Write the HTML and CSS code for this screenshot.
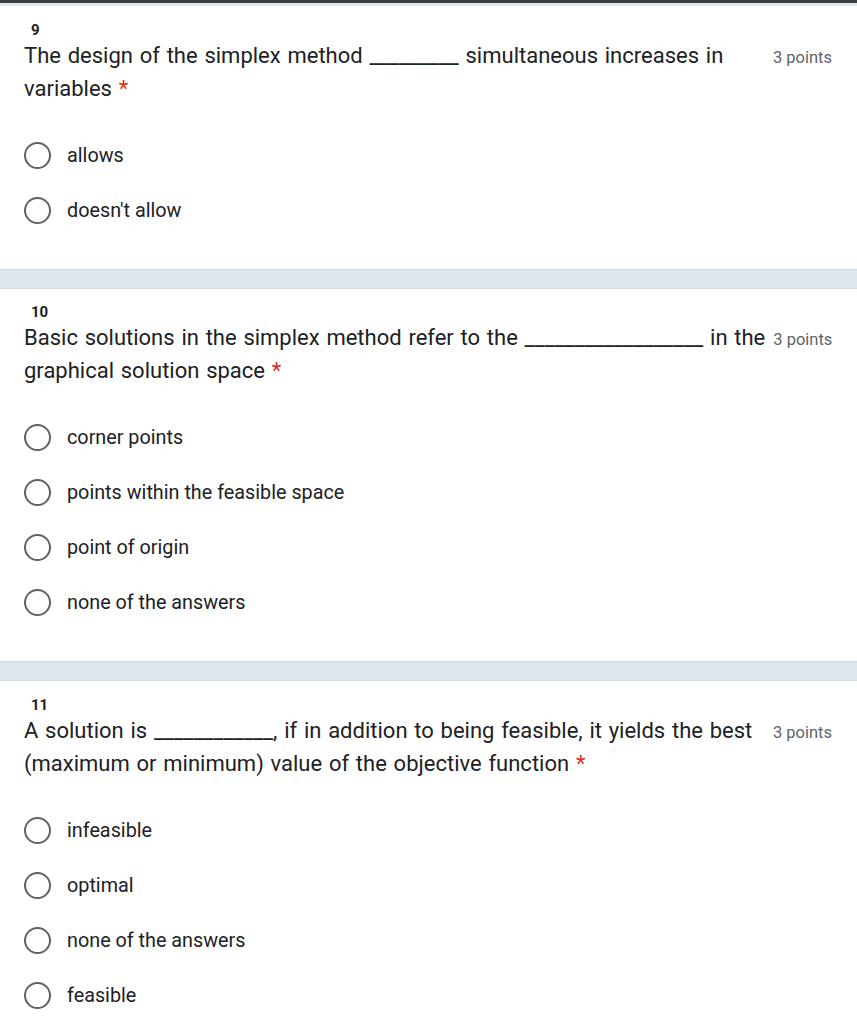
FILE: index.html
```html
<!DOCTYPE html>
<html lang="en">
<head>
<meta charset="utf-8">
<title>Quiz</title>
<link rel="stylesheet" href="styles.css">
</head>
<body>
<div class="topbar"></div>
<div class="topline"></div>

<section class="question">
  <div class="qnum">9</div>
  <div class="qhead">
    <div class="qtitle">The design of the simplex method _________ simultaneous increases in<br>variables <span class="req">*</span></div>
    <div class="points">3 points</div>
  </div>
  <div class="options">
    <label class="option"><span class="radio"></span><span class="otext">allows</span></label>
    <label class="option"><span class="radio"></span><span class="otext">doesn't allow</span></label>
  </div>
</section>

<div class="band"></div>

<section class="question">
  <div class="qnum">10</div>
  <div class="qhead">
    <div class="qtitle">Basic solutions in the simplex method refer to the __________________ in the<br>graphical solution space <span class="req">*</span></div>
    <div class="points">3 points</div>
  </div>
  <div class="options">
    <label class="option"><span class="radio"></span><span class="otext">corner points</span></label>
    <label class="option"><span class="radio"></span><span class="otext">points within the feasible space</span></label>
    <label class="option"><span class="radio"></span><span class="otext">point of origin</span></label>
    <label class="option"><span class="radio"></span><span class="otext">none of the answers</span></label>
  </div>
</section>

<div class="band"></div>

<section class="question">
  <div class="qnum">11</div>
  <div class="qhead">
    <div class="qtitle">A solution is ____________, if in addition to being feasible, it yields the best<br>(maximum or minimum) value of the objective function <span class="req">*</span></div>
    <div class="points">3 points</div>
  </div>
  <div class="options">
    <label class="option"><span class="radio"></span><span class="otext">infeasible</span></label>
    <label class="option"><span class="radio"></span><span class="otext">optimal</span></label>
    <label class="option"><span class="radio"></span><span class="otext">none of the answers</span></label>
    <label class="option"><span class="radio"></span><span class="otext">feasible</span></label>
  </div>
</section>
</body>
</html>
```

FILE: styles.css
```css
html, body {
  margin: 0;
  padding: 0;
  background: #ffffff;
}

body {
  font-family: Roboto, "Liberation Sans", Arial, sans-serif;
  color: #202124;
}

.topbar {
  height: 3px;
  background: #3c4043;
}

.topline {
  height: 3px;
  background: #dde6ed;
}

.question {
  padding: 15.5px 25px 31px 24px;
}

.qnum {
  font-size: 15px;
  font-weight: 700;
  line-height: 16px;
  padding-left: 7px;
  margin-bottom: 1px;
  color: #202124;
}

.qhead {
  display: flex;
  align-items: baseline;
}

.qtitle {
  flex: 1;
  font-size: 22px;
  word-spacing: 1.3px;
  line-height: 33px;
  white-space: nowrap;
  color: #202124;
}

.req {
  color: #d93025;
}

.points {
  font-size: 16.5px;
  color: #5f6368;
  white-space: nowrap;
  margin-left: 8px;
}

.options {
  display: flex;
  flex-direction: column;
  margin-top: 23px;
}

.option {
  display: flex;
  align-items: center;
  height: 55px;
}

.radio {
  box-sizing: border-box;
  width: 27px;
  height: 27px;
  border: 2.7px solid #5f6368;
  border-radius: 50%;
  flex: none;
}

.otext {
  margin-left: 16px;
  font-size: 19.8px;
  color: #202124;
}

.band {
  height: 18px;
  background: #dde6ed;
  border-top: 1px solid #d6dce1;
  border-bottom: 1px solid #d6dce1;
}
```
